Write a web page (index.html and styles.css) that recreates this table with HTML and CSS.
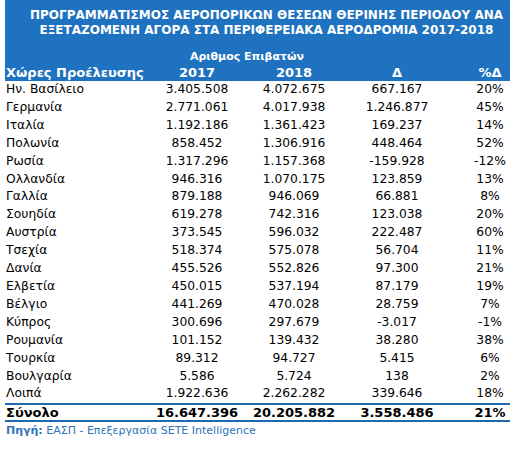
FILE: index.html
```html
<!DOCTYPE html>
<html lang="el">
<head>
<meta charset="utf-8">
<link rel="stylesheet" href="styles.css">
</head>
<body>
<table class="tbl">
  <colgroup>
    <col class="c1"><col class="c2"><col class="c3"><col class="c4"><col class="c5">
  </colgroup>
  <thead>
    <tr class="title-row"><th colspan="5" class="title">ΠΡΟΓΡΑΜΜΑΤΙΣΜΟΣ ΑΕΡΟΠΟΡΙΚΩΝ ΘΕΣΕΩΝ ΘΕΡΙΝΗΣ ΠΕΡΙΟΔΟΥ ΑΝΑ<br>ΕΞΕΤΑΖΟΜΕΝΗ ΑΓΟΡΑ ΣΤΑ ΠΕΡΙΦΕΡΕΙΑΚΑ ΑΕΡΟΔΡΟΜΙΑ 2017-2018</th></tr>
    <tr class="sub-row"><th></th><th colspan="2" class="sub">Αριθμος Επιβατών</th><th></th><th></th></tr>
    <tr class="head-row"><th class="lbl">Χώρες Προέλευσης</th><th class="h2017">2017</th><th class="h2018">2018</th><th class="d">Δ</th><th>%Δ</th></tr>
  </thead>
  <tbody>
    <tr><td class="lbl">Ην. Βασίλειο</td><td>3.405.508</td><td>4.072.675</td><td class="d">667.167</td><td>20%</td></tr>
    <tr><td class="lbl">Γερμανία</td><td>2.771.061</td><td>4.017.938</td><td class="d">1.246.877</td><td>45%</td></tr>
    <tr><td class="lbl">Ιταλία</td><td>1.192.186</td><td>1.361.423</td><td class="d">169.237</td><td>14%</td></tr>
    <tr><td class="lbl">Πολωνία</td><td>858.452</td><td>1.306.916</td><td class="d">448.464</td><td>52%</td></tr>
    <tr><td class="lbl">Ρωσία</td><td>1.317.296</td><td>1.157.368</td><td class="d">-159.928</td><td>-12%</td></tr>
    <tr><td class="lbl">Ολλανδία</td><td>946.316</td><td>1.070.175</td><td class="d">123.859</td><td>13%</td></tr>
    <tr><td class="lbl">Γαλλία</td><td>879.188</td><td>946.069</td><td class="d">66.881</td><td>8%</td></tr>
    <tr><td class="lbl">Σουηδία</td><td>619.278</td><td>742.316</td><td class="d">123.038</td><td>20%</td></tr>
    <tr><td class="lbl">Αυστρία</td><td>373.545</td><td>596.032</td><td class="d">222.487</td><td>60%</td></tr>
    <tr><td class="lbl">Τσεχία</td><td>518.374</td><td>575.078</td><td class="d">56.704</td><td>11%</td></tr>
    <tr><td class="lbl">Δανία</td><td>455.526</td><td>552.826</td><td class="d">97.300</td><td>21%</td></tr>
    <tr><td class="lbl">Ελβετία</td><td>450.015</td><td>537.194</td><td class="d">87.179</td><td>19%</td></tr>
    <tr><td class="lbl">Βέλγιο</td><td>441.269</td><td>470.028</td><td class="d">28.759</td><td>7%</td></tr>
    <tr><td class="lbl">Κύπρος</td><td>300.696</td><td>297.679</td><td class="d">-3.017</td><td>-1%</td></tr>
    <tr><td class="lbl">Ρουμανία</td><td>101.152</td><td>139.432</td><td class="d">38.280</td><td>38%</td></tr>
    <tr><td class="lbl">Τουρκία</td><td>89.312</td><td>94.727</td><td class="d">5.415</td><td>6%</td></tr>
    <tr><td class="lbl">Βουλγαρία</td><td>5.586</td><td>5.724</td><td class="d">138</td><td>2%</td></tr>
    <tr><td class="lbl">Λοιπά</td><td>1.922.636</td><td>2.262.282</td><td class="d">339.646</td><td>18%</td></tr>
  </tbody>
  <tfoot>
    <tr class="total"><td class="lbl">Σύνολο</td><td>16.647.396</td><td>20.205.882</td><td class="d">3.558.486</td><td>21%</td></tr>
    <tr class="source-row"><td colspan="5" class="source"><b>Πηγή:</b> ΕΑΣΠ - Επεξεργασία SETE Intelligence</td></tr>
  </tfoot>
</table>
</body>
</html>
```

FILE: styles.css
```css
html, body {
  margin: 0;
  padding: 0;
  background: #ffffff;
}

body {
  font-family: "DejaVu Sans", Verdana, sans-serif;
  color: #000;
}

.tbl {
  margin-left: 5px;
  width: 505px;
  table-layout: fixed;
  border-collapse: collapse;
  border-spacing: 0;
}

.c1 { width: 145px; }
.c2 { width: 94px; }
.c3 { width: 100px; }
.c4 { width: 126px; }
.c5 { width: 40px; }

.tbl th,
.tbl td {
  padding: 0;
  text-align: center;
  white-space: nowrap;
  vertical-align: middle;
}

.tbl thead th {
  background: #1f72c0;
  color: #ffffff;
  font-weight: bold;
}

.title {
  font-size: 12px;
  line-height: 15px;
  padding: 8px 0 11px 18px !important;
  overflow: visible;
}

.sub-row th {
  font-size: 11px;
  height: 16px;
  line-height: 16px;
}

.head-row th {
  font-size: 13px;
  height: 16px;
  line-height: 16px;
}

.tbl .lbl {
  text-align: left;
  padding-left: 1px;
}

.tbl .d {
  padding-right: 20px;
}

.h2017 { padding-right: 14px; }

tbody td {
  font-size: 12.3px;
  height: 17.9px;
  line-height: 17.9px;
}

.total td {
  font-size: 13px;
  font-weight: bold;
  height: 15px;
  line-height: 15px;
  border-top: 2.5px solid #1e6aac;
  border-bottom: 2.5px solid #1e6aac;
}

.source {
  text-align: left !important;
  font-size: 11px;
  color: #2f74b8;
  height: 18px;
  line-height: 18px;
  padding-left: 1px !important;
}

.source b {
  font-weight: bold;
}
```
